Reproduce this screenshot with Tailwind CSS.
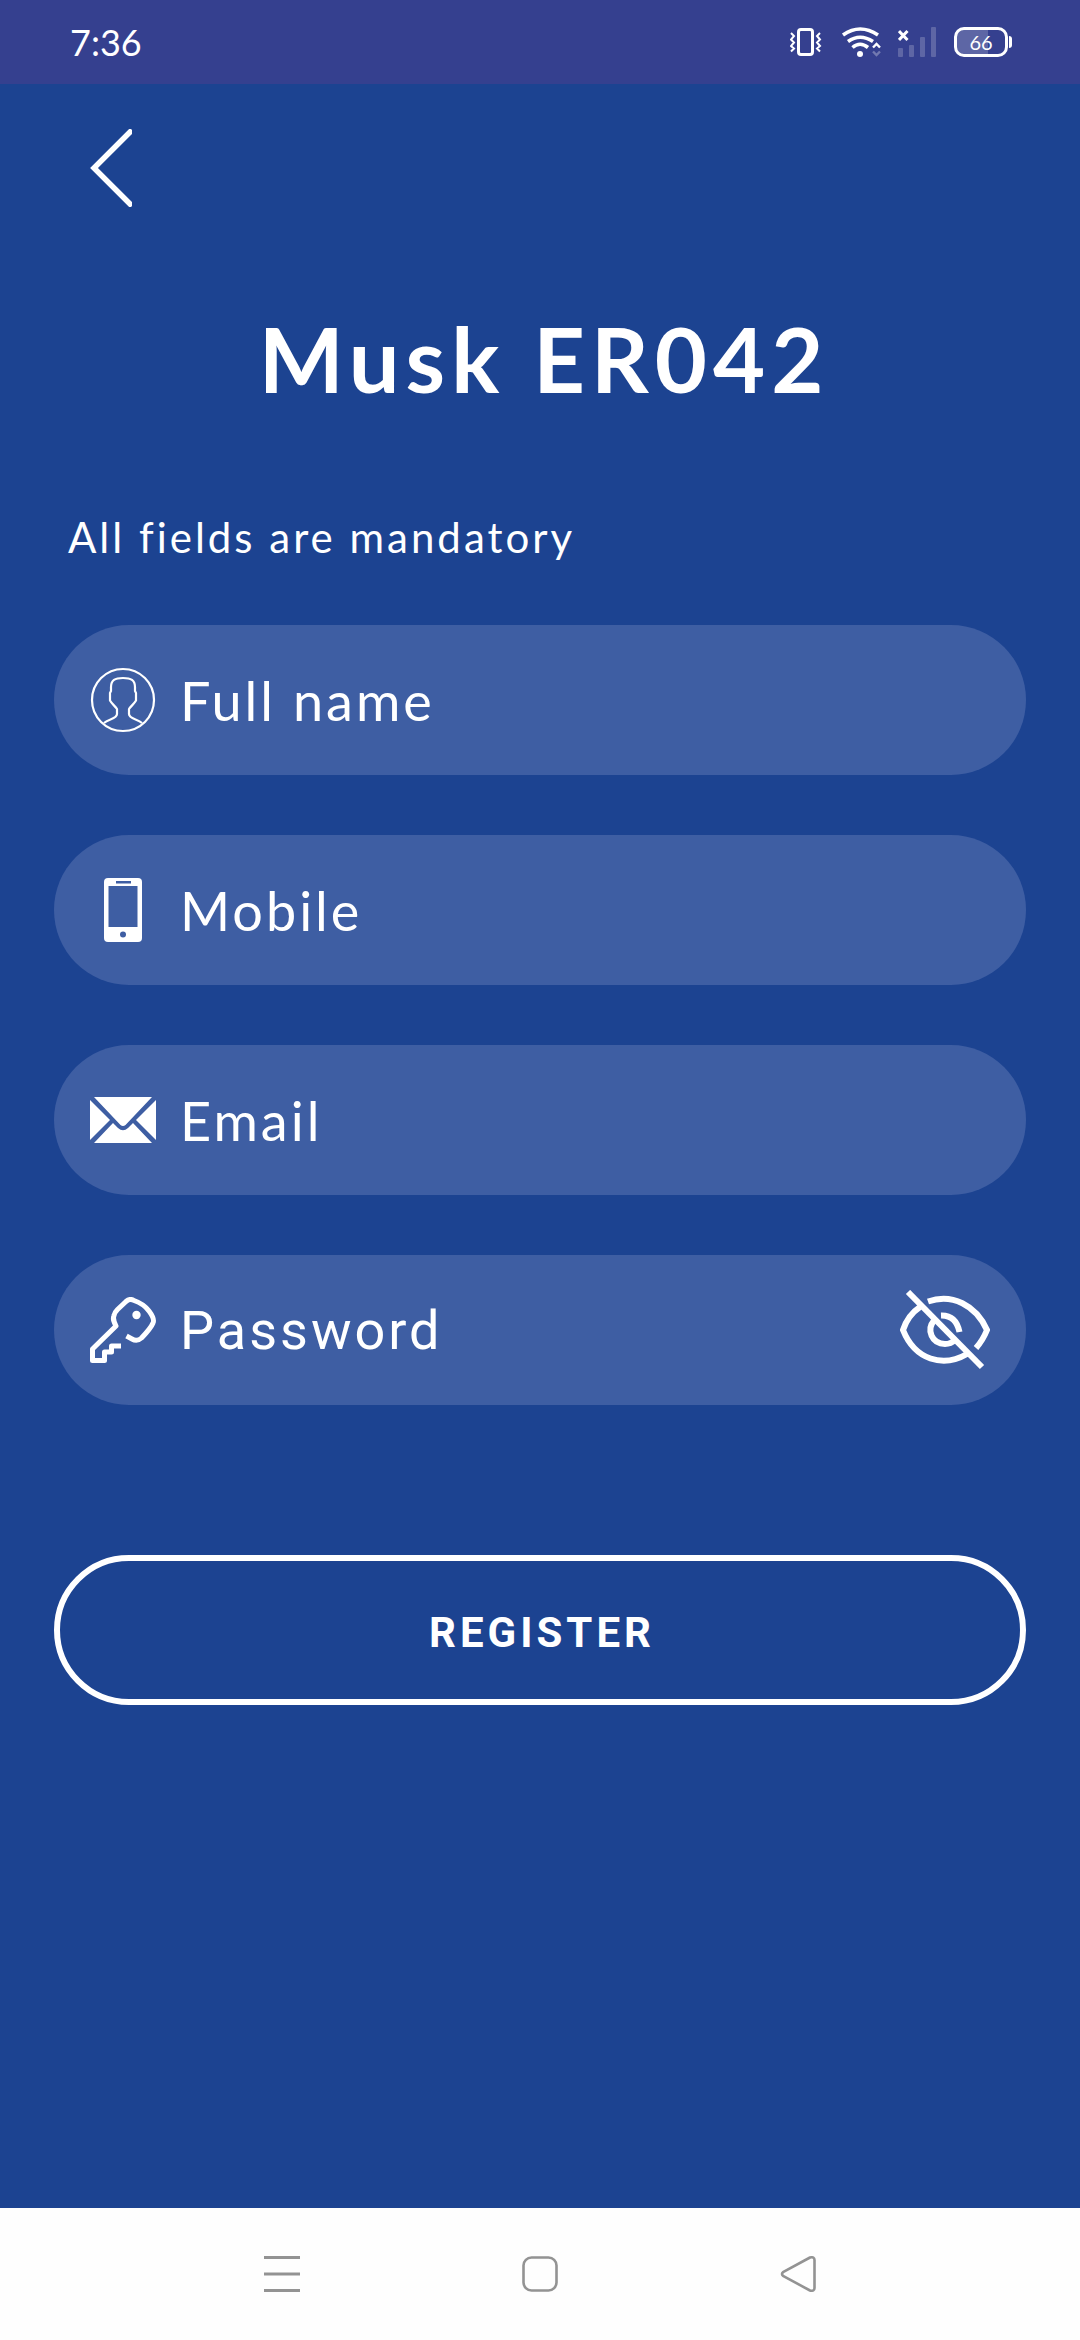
<!DOCTYPE html>
<html lang="en">
<head>
  <meta charset="UTF-8" />
  <meta name="viewport" content="width=device-width, initial-scale=1.0" />
  <title>Register - Musk ER042</title>
  <script src="https://cdn.jsdelivr.net/npm/@tailwindcss/browser@4"></script>
</head>
<body class="min-h-screen flex flex-col bg-[#1c4391] text-white font-['Lato',sans-serif]">

  <!-- status bar -->
  <header class="flex items-center justify-between h-[84px] px-[68px] bg-[#35408f]">
    <span class="pl-0.5 text-4xl leading-none">7:36</span>
    <div class="flex items-center gap-4">
      <!-- vibrate -->
      <svg class="w-8 h-[30px]" viewBox="0 0 32 30" fill="none" stroke="#fff">
        <rect x="8.5" y="2.5" width="14" height="25" rx="2.5" stroke-width="3" />
        <path d="M1 6l3 3-3 3.500 3 3-3 3.500 3 2.500-3 3M30 6l-3 3 3 3.500-3 3 3 3.500-3 2.500 3 3" stroke-width="2" />
      </svg>
      <!-- wifi -->
      <svg class="w-11 h-[30px]" viewBox="0 0 44 30" fill="none" stroke="#fff">
        <path d="M5 8Q22-4 40 8M10 14.500Q22 6 35 14.500M14.500 20.500Q22 14 30 20.500" stroke-width="3.6" />
        <circle cx="22" cy="27" r="3" fill="#fff" stroke="none" />
        <path d="M35 20.500l3.500-3.500 3.500 3.500" stroke-width="2.4" />
        <path d="M35 24.500l3.500 3.500 3.500-3.500" stroke-width="2.4" opacity=".3" />
      </svg>
      <!-- no signal -->
      <svg class="w-10 h-[30px]" viewBox="0 0 40 30" fill="none">
        <path d="M1 4l8.500 9M9.500 4l-8.500 9" stroke="#fff" stroke-width="3" />
        <g fill="#fff" opacity=".2">
          <rect x="0" y="21" width="5" height="9" rx="1" />
          <rect x="11" y="18" width="5" height="12" rx="1" />
          <rect x="22" y="10" width="5" height="20" rx="1" />
          <rect x="33" y="0" width="5" height="30" rx="1" />
        </g>
      </svg>
      <!-- battery -->
      <div class="flex items-center gap-px">
        <div class="flex items-center justify-center w-[54px] h-[30px] rounded-[10px] border-3 border-white bg-linear-to-r from-white/20 from-65% to-transparent to-65% text-xl leading-none">66</div>
        <div class="w-[3px] h-3 rounded-r bg-white"></div>
      </div>
    </div>
  </header>

  <main class="flex-1 w-9/10 mx-auto pt-[45px]">
    <button type="button" aria-label="Back" class="block ml-9">
      <svg class="w-[42px] h-[78px]" viewBox="0 0 42 78" fill="none" stroke="#fff" stroke-width="5.5">
        <path d="M42 1L4 39l38 38" />
      </svg>
    </button>

    <h1 class="mt-24 pl-2 text-center text-[90px] leading-[110px] font-bold tracking-[6px]">Musk ER042</h1>

    <form>
      <p class="mt-[98px] pl-3.5 text-[42px] leading-[52px] tracking-[3px]">All fields are mandatory</p>

      <div class="mt-[62px] flex flex-col gap-[60px]">
        <div class="flex items-center gap-6 h-[150px] px-9 rounded-full bg-[#3e5ea3]">
          <label for="name" aria-label="Full name" class="shrink-0">
            <svg class="block w-[66px] h-[66px]" viewBox="0 0 66 66" fill="none" stroke="#fff" stroke-width="2.2">
              <circle cx="33" cy="33" r="31" />
              <path d="M14 56C18 52 27 52 27 47V42C25 39 22 37 20 33.500V26L21 24V20C21 13 25 11 33 11S45 13 45 20V24L46 26V33.500C44 37 41 39 39 42V47C39 52 48 52 52 56" />
            </svg>
          </label>
          <input id="name" type="text" placeholder="Full name" class="flex-1 min-w-0 h-full text-[54px] tracking-[3px] outline-none placeholder:text-white" />
        </div>

        <div class="flex items-center gap-6 h-[150px] px-9 rounded-full bg-[#3e5ea3]">
          <label for="mobile" aria-label="Mobile" class="shrink-0">
            <svg class="block w-[66px] h-[66px]" viewBox="0 0 66 66">
              <rect x="14" y="1" width="38" height="64" rx="4" fill="#fff" />
              <rect x="26" y="4" width="15" height="2.5" fill="#3e5ea3" />
              <rect x="18.5" y="9" width="29" height="41" fill="#3e5ea3" />
              <circle cx="33" cy="57.5" r="3" fill="#3e5ea3" />
            </svg>
          </label>
          <input id="mobile" type="tel" placeholder="Mobile" class="flex-1 min-w-0 h-full text-[54px] tracking-[3px] outline-none placeholder:text-white" />
        </div>

        <div class="flex items-center gap-6 h-[150px] px-9 rounded-full bg-[#3e5ea3]">
          <label for="email" aria-label="Email" class="shrink-0">
            <svg class="block w-[66px] h-[66px]" viewBox="0 0 66 66" fill="#fff">
              <path d="M4 10H62L35.500 38Q33 40 30.500 38ZM0 13L20 33 0 53ZM66 13L46 33 66 53ZM4 56L23 36 28 41Q33 45.500 38 41L43 36 62 56Z" />
            </svg>
          </label>
          <input id="email" type="email" placeholder="Email" class="flex-1 min-w-0 h-full text-[54px] tracking-[3px] outline-none placeholder:text-white" />
        </div>

        <div class="flex items-center gap-6 h-[150px] px-9 rounded-full bg-[#3e5ea3]">
          <label for="password" aria-label="Password" class="shrink-0">
            <svg class="block w-[66px] h-[66px]" viewBox="0 0 66 66" fill="none" stroke="#fff" stroke-width="5" stroke-linejoin="round">
              <path d="M31 49H21.500V55H14.500V63.500H2.500V52L26 29C24 25 22.500 22 24 18.500C24.500 15.500 26 14 27.500 12.500L36 4.500Q40 1 44 3.500Q54 7 59 14Q65 22 63 26Q61 31 51.500 41Q47 45 42 42L36.500 39" />
              <circle cx="46.5" cy="18" r="4.2" fill="#fff" stroke="none" />
            </svg>
          </label>
          <input id="password" type="password" placeholder="Password" class="flex-1 min-w-0 h-full font-['Roboto',sans-serif] text-[54px] tracking-[3px] outline-none placeholder:text-white" />
          <button type="button" aria-label="Show password" class="shrink-0">
            <svg class="w-[90px] h-20" viewBox="0 0 90 80" fill="none" stroke="#fff" stroke-width="6">
              <path d="M8 2L82 77" />
              <path d="M28 11.500C52 3 76 15 87 40Q83 50 76 58" />
              <path d="M20 17Q8 25 3 40C15 70 43 78 67 64" />
              <path d="M41 25.500Q56 25 59.500 42" />
              <path d="M34 30.500C26 40 32 54 45 54Q51 54 55 50" />
            </svg>
          </button>
        </div>
      </div>

      <button type="submit" class="block w-full h-[150px] mt-[150px] pt-1 pl-1 rounded-full border-6 border-white font-['Roboto',sans-serif] text-[42px] font-bold tracking-[4px]">REGISTER</button>
    </form>
  </main>

  <!-- navigation bar -->
  <nav class="flex items-center justify-center gap-[222px] h-[132px] bg-[#fefefe]">
    <button type="button" aria-label="Recent apps">
      <svg class="w-9 h-9" viewBox="0 0 36 36" stroke="#939393" stroke-width="3">
        <path d="M0 1.500h36M0 18h36M0 34.500h36" />
      </svg>
    </button>
    <button type="button" aria-label="Home">
      <svg class="w-9 h-9" viewBox="0 0 36 36" fill="none" stroke="#939393" stroke-width="2.6">
        <rect x="1.5" y="1.5" width="33" height="33" rx="8" />
      </svg>
    </button>
    <button type="button" aria-label="Go back">
      <svg class="w-9 h-9" viewBox="0 0 36 36" fill="none" stroke="#939393" stroke-width="2.6" stroke-linejoin="round">
        <path d="M3 16.200Q1 18 3 19.800L30 34.500Q34.500 35.500 34.500 32V4Q34.500 0.500 30 1.500Z" />
      </svg>
    </button>
  </nav>
</body>
</html>
